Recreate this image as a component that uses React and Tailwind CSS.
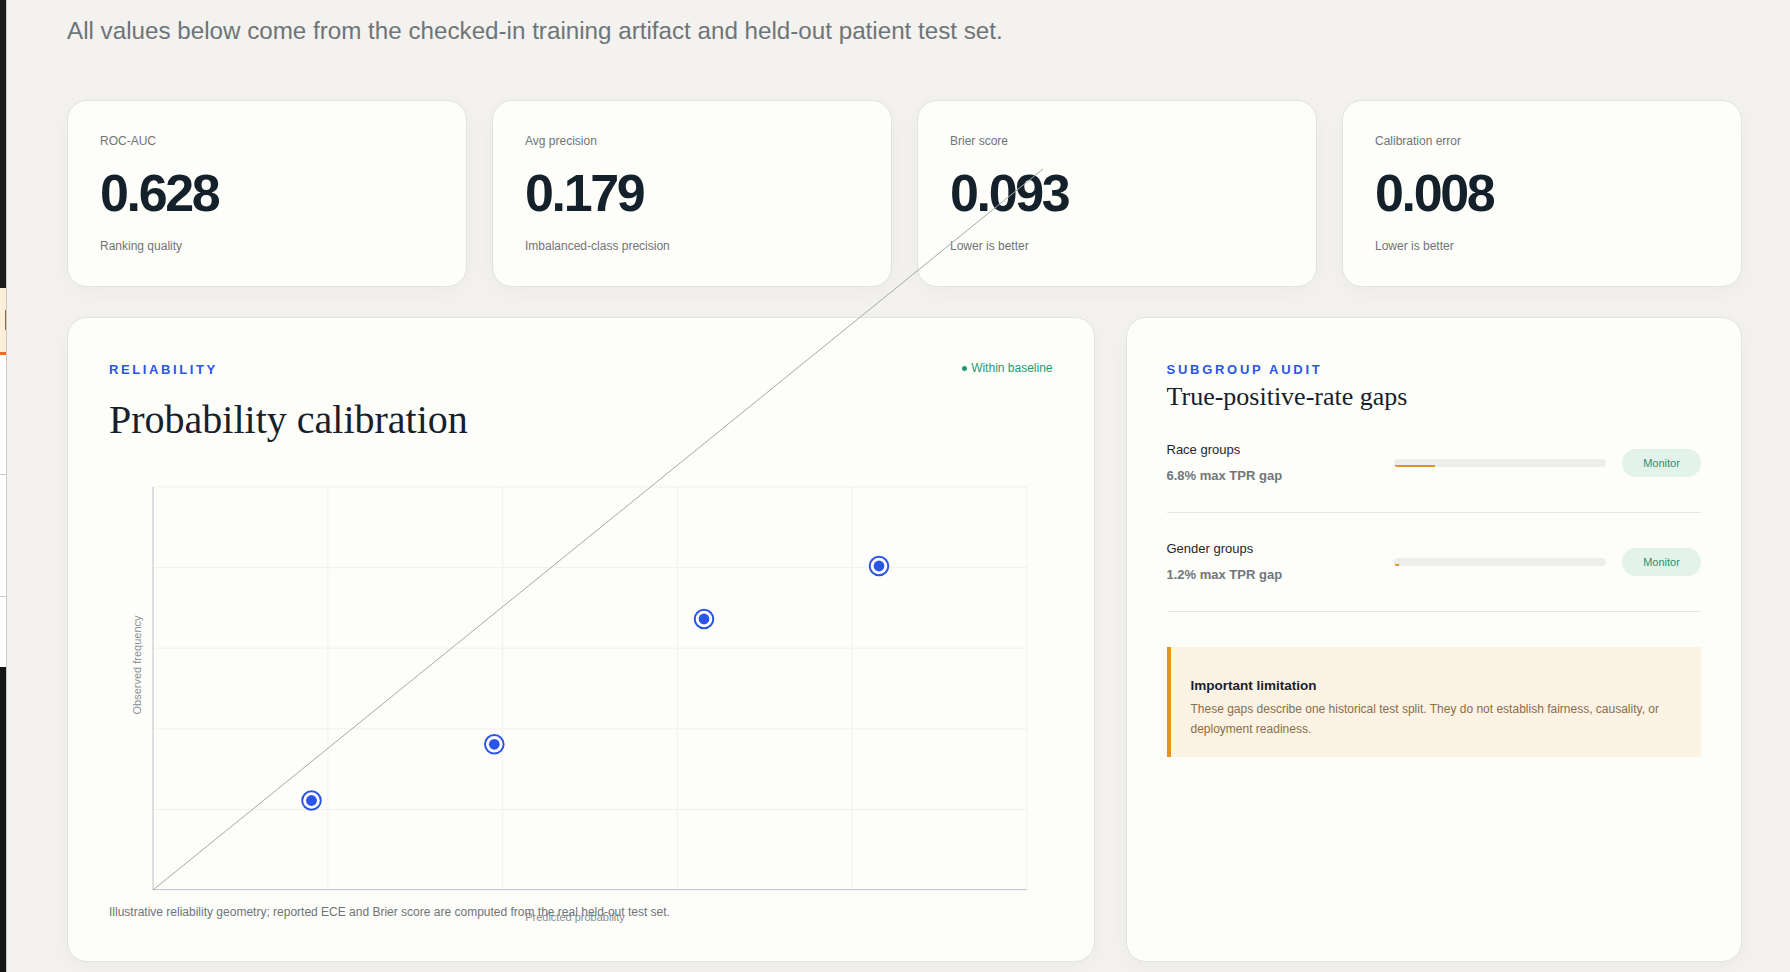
import React from "react";

const metrics = [
  { label: "ROC-AUC", value: "0.628", note: "Ranking quality" },
  { label: "Avg precision", value: "0.179", note: "Imbalanced-class precision" },
  { label: "Brier score", value: "0.093", note: "Lower is better" },
  { label: "Calibration error", value: "0.008", note: "Lower is better" },
];

const groups = [
  { name: "Race groups", gap: "6.8% max TPR gap", fill: 41 },
  { name: "Gender groups", gap: "1.2% max TPR gap", fill: 5 },
];

// reliability points, already in svg pixel space
const points = [
  [202.5, 313.5],
  [385.3, 257.3],
  [595, 132],
  [770, 79],
];

const sans = { fontFamily: '"Liberation Sans", Arial, sans-serif' };
const serif = { fontFamily: '"Liberation Serif", "Times New Roman", serif' };

const MetricCard = ({ label, value, note }) => (
  <div className="h-[187px] rounded-[20px] border border-[#e3e3de] bg-[#fdfdfa] px-8 pt-[33px] shadow-[0_6px_22px_rgba(0,0,0,0.035)]">
    <p className="text-[12px] leading-[14px] text-[#6f7478]">{label}</p>
    <p className="mt-[19px] text-[52px] font-bold leading-none tracking-[-0.045em] text-[#14202a]">
      {value}
    </p>
    <p className="mt-5 text-[12px] leading-[14px] text-[#6f7478]">{note}</p>
  </div>
);

const CalibrationChart = () => {
  const x0 = 44;
  const w = 874;
  const h = 403;
  const cols = [0, 1, 2, 3, 4, 5];
  return (
    <svg width="918" height={h} className="mt-[43px] block overflow-visible">
      {cols.map((i) => (
        <line
          key={"v" + i}
          x1={x0 + (w / 5) * i}
          x2={x0 + (w / 5) * i}
          y1="0"
          y2={h}
          stroke="#eff1f1"
          strokeWidth="1"
        />
      ))}
      {cols.map((i) => (
        <line
          key={"h" + i}
          x1={x0}
          x2={x0 + w}
          y1={(h / 5) * i}
          y2={(h / 5) * i}
          stroke="#eff1f1"
          strokeWidth="1"
        />
      ))}
      <line x1={x0} x2={x0} y1="0" y2={h} stroke="#c3c9cc" strokeWidth="1" />
      <line x1={x0} x2={x0 + w} y1={h - 0.5} y2={h - 0.5} stroke="#c3c9cc" strokeWidth="1" />
      <line x1={x0} y1={h} x2="934" y2="-318" stroke="#a3a9ab" strokeWidth="1" />
      {points.map(([cx, cy], i) => (
        <g key={i}>
          <circle cx={cx} cy={cy} r="9.3" fill="#ffffff" stroke="#2b55e6" strokeWidth="2" />
          <circle cx={cx} cy={cy} r="5.4" fill="#2b55e6" />
        </g>
      ))}
      <text
        x="29"
        y="178"
        transform="rotate(-90 29 178)"
        textAnchor="middle"
        dominantBaseline="middle"
        fontSize="11"
        fill="#8a8f93"
        style={sans}
      >
        Observed frequency
      </text>
      <text
        x="466"
        y="431"
        textAnchor="middle"
        dominantBaseline="middle"
        fontSize="11"
        fill="#8a8f93"
        style={sans}
      >
        Predicted probability
      </text>
    </svg>
  );
};

const SideStrip = () => (
  <div className="flex w-[7px] shrink-0 flex-col border-r border-[#c9c9c9]">
    <div className="h-[288px] bg-[#1c1c1c]" />
    <div className="flex h-[64px] items-center bg-[#fcefd9] pl-[5px]">
      <div className="h-[20px] w-[1px] bg-[#8a6d47]" />
    </div>
    <div className="h-[3px] bg-[#f26a1b]" />
    <div className="h-[120px] border-b border-[#c9c9c9] bg-white" />
    <div className="h-[122px] border-b border-[#c9c9c9] bg-white" />
    <div className="h-[70px] bg-white" />
    <div className="flex-1 bg-[#161616]" />
  </div>
);

export default function App() {
  return (
    <div className="flex h-[972px] overflow-hidden bg-[#f3f2ee]" style={sans}>
      <SideStrip />
      <div className="flex-1 pl-[60px] pr-[48px] pt-[15px]">
        <p className="text-[24.2px] leading-[32px] text-[#6d757a]">
          All values below come from the checked-in training artifact and held-out patient test set.
        </p>

        <div className="mt-[53px] grid grid-cols-4 gap-[25px]">
          {metrics.map((m) => (
            <MetricCard key={m.label} {...m} />
          ))}
        </div>

        <div className="mt-[30px] grid grid-cols-[5fr_3fr] gap-[31px]">
          {/* Reliability */}
          <section className="relative z-10 rounded-[20px] border border-[#e3e3de] bg-[#fdfdfa] px-[41px] pb-[41px] pt-[44px] shadow-[0_6px_22px_rgba(0,0,0,0.035)]">
            <div className="flex items-start justify-between">
              <p className="text-[13px] font-bold leading-[16px] tracking-[0.2em] text-[#2b55e6]">
                RELIABILITY
              </p>
              <p className="-mt-[2px] flex items-center gap-[4px] text-[12px] leading-[16px] text-[#1f9a76]">
                <span className="h-[5px] w-[5px] rounded-full bg-[#1f9a76]" />
                Within baseline
              </p>
            </div>
            <h2 className="mt-[18px] text-[40px] leading-[48px] text-[#16212b]" style={serif}>
              Probability calibration
            </h2>
            <CalibrationChart />
            <p className="mt-[14px] text-[12px] leading-[16px] text-[#6f7478]">
              Illustrative reliability geometry; reported ECE and Brier score are computed from the real held-out test set.
            </p>
          </section>

          {/* Subgroup audit */}
          <section className="rounded-[20px] border border-[#e3e3de] bg-[#fdfdfa] px-10 pt-[44px] shadow-[0_6px_22px_rgba(0,0,0,0.035)]">
            <p className="text-[13px] font-bold leading-[16px] tracking-[0.21em] text-[#2b55e6]">
              SUBGROUP AUDIT
            </p>
            <h3 className="mt-[4px] text-[26px] leading-[30px] text-[#16212b]" style={serif}>
              True-positive-rate gaps
            </h3>

            <div className="mt-[2px]">
              {groups.map((g) => (
                <div
                  key={g.name}
                  className="grid grid-cols-[1fr_1fr_auto] items-center gap-4 border-b border-[#e6e7e4] pb-[27px] pt-[27px]"
                >
                  <div>
                    <p className="text-[13px] leading-[18px] text-[#1d262e]">{g.name}</p>
                    <p className="mt-2 text-[13px] font-bold leading-[18px] text-[#71777b]">{g.gap}</p>
                  </div>
                  <div className="flex h-2 flex-col justify-end overflow-hidden rounded-full bg-[#eceeec]">
                    <div
                      className="h-[2px] rounded-l-full bg-[#e2922a]"
                      style={{ width: g.fill }}
                    />
                  </div>
                  <span className="flex h-[28px] w-[79px] items-center justify-center rounded-full bg-[#e3f3ec] text-[11px] text-[#2c8f6c]">
                    Monitor
                  </span>
                </div>
              ))}
            </div>

            <div className="mt-[35px] border-l-4 border-[#e8921a] bg-[#fdf3e4] pb-[18px] pl-5 pr-6 pt-[30px]">
              <p className="text-[13.5px] font-bold leading-[18px] text-[#17222c]">Important limitation</p>
              <p className="mt-[4px] text-[12px] leading-[20px] text-[#8a6d4a]">
                These gaps describe one historical test split. They do not establish fairness, causality, or deployment readiness.
              </p>
            </div>
          </section>
        </div>
      </div>
    </div>
  );
}
